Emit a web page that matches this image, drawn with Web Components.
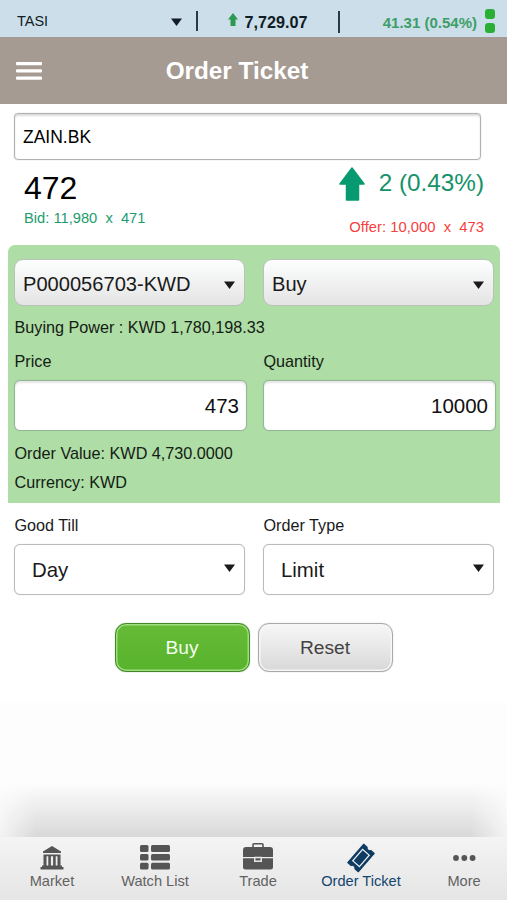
<!DOCTYPE html>
<html lang="en">
<head>
<meta charset="utf-8">
<meta name="viewport" content="width=device-width, initial-scale=1">
<title>Order Ticket</title>
<style>
  html, body {
    margin: 0;
    height: 100%;
    overflow: hidden;
    background: #fff;
    font-family: "Liberation Sans", Arial, sans-serif;
  }
</style>
</head>
<body>
<order-app></order-app>

<script>
const caret = `<svg class="caret" width="11" height="8" viewBox="0 0 11 8"><path d="M0 .5h11L5.5 8z" fill="currentColor"/></svg>`;

class MarketTicker extends HTMLElement {
  connectedCallback() {
    this.attachShadow({ mode: 'open' });
    this.shadowRoot.innerHTML = `
      <style>
        :host {
          display: flex;
          align-items: center;
          box-sizing: border-box;
          height: 37px;
          padding: 6px 12px 0 17px;
          background: #ccdeea;
          color: #101c26;
          white-space: nowrap;
        }
        .market { flex: 0 0 154px; font-size: 14.5px; margin-top: -2px; }
        .sep { width: 2px; height: 20px; background: #2a3a48; }
        .first { margin: -2px 0 0 14px; }
        .second { height: 22px; }
        .index {
          width: 140px;
          display: flex;
          align-items: center;
          justify-content: center;
          gap: 6px;
          font-weight: bold;
          font-size: 16.2px;
        }
        .index svg { margin-top: -4px; }
        .index span { padding-top: 2px; }
        .change { margin-left: auto; padding-top: 1px; font-weight: bold; font-size: 15px; color: #3d9e68; }
        .lights { display: grid; gap: 4px; margin: -2px 0 0 8px; }
        .lights i { width: 10px; height: 10px; border-radius: 3px; background: #29b034; }
      </style>
      <span class="market">TASI</span>
      ${caret}
      <span class="sep first"></span>
      <span class="index">
        <svg width="10" height="13" viewBox="0 0 10 13"><path d="M5 0l5 6.500H7.500V13h-5V6.500H0z" fill="#2c9950"/></svg>
        <span>7,729.07</span>
      </span>
      <span class="sep second"></span>
      <span class="change">41.31 (0.54%)</span>
      <span class="lights"><i></i><i></i></span>
    `;
  }
}
customElements.define('market-ticker', MarketTicker);

class TitleBar extends HTMLElement {
  connectedCallback() {
    this.attachShadow({ mode: 'open' });
    this.shadowRoot.innerHTML = `
      <style>
        :host {
          display: grid;
          grid-template-columns: 26px 1fr 26px;
          align-items: center;
          box-sizing: border-box;
          height: 67px;
          padding: 0 49px 0 16px;
          background: #a59b92;
          color: #fff;
        }
        h1 { margin: 1px 0 0; font-size: 24.3px; line-height: 28px; text-align: center; }
      </style>
      <svg width="26" height="20" viewBox="0 0 26 20" fill="#fff"><rect y="1" width="26" height="3.200" rx="1"/><rect y="8.300" width="26" height="3.200" rx="1"/><rect y="15.600" width="26" height="3.200" rx="1"/></svg>
      <h1><slot></slot></h1>
    `;
  }
}
customElements.define('title-bar', TitleBar);

class QuoteSummary extends HTMLElement {
  connectedCallback() {
    this.attachShadow({ mode: 'open' });
    this.shadowRoot.innerHTML = `
      <style>
        :host { display: block; height: 133px; }
        .symbol {
          box-sizing: border-box;
          width: 467px;
          height: 47px;
          margin: 1px 0 0 14px;
          padding: 0 8px;
          border: 1px solid #b1b1b1;
          border-radius: 4px;
          box-shadow: inset 0 2px 2px rgba(0,0,0,.14), 0 0 1px #aaa;
          font-size: 17.5px;
          line-height: 46px;
        }
        .row { display: flex; justify-content: space-between; padding: 0 23px 0 24px; }
        .last { font-size: 32px; line-height: 36px; padding-top: 10px; }
        .bid, .offer { white-space: pre; line-height: 17px; }
        .bid { font-size: 14.7px; color: #1b9b6e; padding-top: 4px; }
        .right { display: flex; flex-direction: column; align-items: flex-end; }
        .move { display: flex; align-items: center; gap: 14px; font-size: 24.3px; line-height: 28px; color: #15926a; padding-top: 5px; }
        .move svg { margin-top: 2px; }
        .move span { margin-bottom: 1px; }
        .offer { font-size: 14.8px; color: #f7403e; padding-top: 18px; }
      </style>
      <div class="symbol">ZAIN.BK</div>
      <div class="row">
        <div>
          <div class="last">472</div>
          <div class="bid">Bid: 11,980  x  471</div>
        </div>
        <div class="right">
          <div class="move">
            <svg width="26" height="34" viewBox="0 0 26 34"><path d="M13 1l12 16h-5.500v16h-12V17H1z" fill="#079a70" stroke="#079a70" stroke-width="1.500" stroke-linejoin="round"/></svg>
            <span>2 (0.43%)</span>
          </div>
          <div class="offer">Offer: 10,000  x  473</div>
        </div>
      </div>
    `;
  }
}
customElements.define('quote-summary', QuoteSummary);

// variant="glossy" gives the rounded gradient menu, otherwise a flat outlined one
class SelectBox extends HTMLElement {
  connectedCallback() {
    this.attachShadow({ mode: 'open' });
    this.shadowRoot.innerHTML = `
      <style>
        :host {
          display: flex;
          align-items: center;
          justify-content: space-between;
          box-sizing: border-box;
          height: 51px;
          padding: 0 9px 0 17px;
          border: 1px solid #bbb;
          border-radius: 6px;
          background: #fff;
          color: #1a1a1a;
          font-size: 20.4px;
          box-shadow: 0 0 1px #ccc;
        }
        :host([variant="glossy"]) {
          height: 47px;
          padding: 2px 9px 0 8px;
          border-color: #b9c2b9;
          border-radius: 9px;
          background: linear-gradient(#fdfefe, #e4e4e5);
          box-shadow: none;
          font-size: 20.1px;
        }
        .caret { margin-top: -4px; }
        :host([variant="glossy"]) .caret { margin-top: 3px; }
      </style>
      <slot></slot>${caret}
    `;
  }
}
customElements.define('select-box', SelectBox);

class NumberBox extends HTMLElement {
  connectedCallback() {
    this.attachShadow({ mode: 'open' });
    this.shadowRoot.innerHTML = `
      <style>
        :host {
          display: block;
          box-sizing: border-box;
          height: 51px;
          padding: 0 7px;
          border: 1px solid #93b893;
          border-radius: 6px;
          background: #fff;
          box-shadow: inset 0 2px 2px rgba(0,0,0,.1), 0 0 1px #93b8a0;
          color: #111;
          font-size: 20.5px;
          line-height: 50px;
          text-align: right;
        }
      </style>
      <slot></slot>
    `;
  }
}
customElements.define('number-box', NumberBox);

class PushButton extends HTMLElement {
  connectedCallback() {
    this.attachShadow({ mode: 'open' });
    this.shadowRoot.innerHTML = `
      <style>
        :host {
          display: block;
          box-sizing: border-box;
          width: 135px;
          height: 49px;
          border: 1px solid #a9a9a9;
          border-radius: 11px;
          background: linear-gradient(#f7f7f7, #d9d8d9);
          box-shadow: inset 0 0 0 1.5px #f6f6f6, 0 0 1px #aaa;
          color: #424242;
          font-size: 19.2px;
          line-height: 48px;
          text-align: center;
        }
        :host([primary]) {
          border-color: #41872a;
          background: linear-gradient(#66bb37, #58b32c);
          box-shadow: inset 0 0 0 1.5px #a0dc80, 0 0 1px #5f9f48;
          color: #f5fff0;
        }
      </style>
      <slot></slot>
    `;
  }
}
customElements.define('push-button', PushButton);

class OrderForm extends HTMLElement {
  connectedCallback() {
    this.attachShadow({ mode: 'open' });
    this.shadowRoot.innerHTML = `
      <style>
        :host { display: block; color: #142014; font-size: 16.2px; line-height: 20px; }
        .panel {
          box-sizing: border-box;
          height: 258px;
          margin: 0 7px 0 8px;
          padding: 14px 0 0 6px;
          border-radius: 7px 7px 0 0;
          background: #aedda5;
        }
        .cols { display: grid; grid-template-columns: 231px 231px; gap: 18px; }
        .inputs { grid-template-columns: 233px 233px; gap: 16px; }
        .power { padding: 11px 0 14px 0; }
        .labels { padding-bottom: 9px; }
        .value { padding: 12px 0 9px; }
        .extra { margin: 12px 14px 0 14px; color: #1a1a1a; }
        .actions { display: flex; justify-content: center; gap: 8px; padding-top: 28px; }
        .text { padding-left: .5px; }
      </style>
      <div class="panel">
        <div class="cols">
          <select-box variant="glossy">P000056703-KWD</select-box>
          <select-box variant="glossy">Buy</select-box>
        </div>
        <div class="power text">Buying Power : KWD 1,780,198.33</div>
        <div class="cols labels text"><span>Price</span><span>Quantity</span></div>
        <div class="cols inputs">
          <number-box>473</number-box>
          <number-box>10000</number-box>
        </div>
        <div class="value text">Order Value: KWD 4,730.0000</div>
        <div class="text">Currency: KWD</div>
      </div>
      <div class="extra">
        <div class="cols labels text"><span>Good Till</span><span>Order Type</span></div>
        <div class="cols">
          <select-box>Day</select-box>
          <select-box>Limit</select-box>
        </div>
      </div>
      <div class="actions">
        <push-button primary>Buy</push-button>
        <push-button>Reset</push-button>
      </div>
    `;
  }
}
customElements.define('order-form', OrderForm);

const icons = {
  market: `<path d="M12 1L3 6.500V8h18V6.500zM3.500 9.500h17v1.800h-17zM3.500 11h3v10h-3zM8.300 11h2.600v10H8.300zM13.100 11h2.600v10h-2.600zM17.500 11h3v10h-3zM2 20.500h20v1.500H2zM.5 22h23v2.500H.5z"/>`,
  list: `<rect width="8.500" height="7" rx="1.500"/><rect x="11" width="19" height="7" rx="1.500"/><rect y="9" width="8.500" height="6.500" rx="1.500"/><rect x="11" y="9" width="19" height="6.500" rx="1.500"/><rect y="17.800" width="8.500" height="6.700" rx="1.500"/><rect x="11" y="17.800" width="19" height="6.700" rx="1.500"/>`,
  trade: `<path d="M10 5V1.500Q10 .8 11 .8h8q1 0 1 .7V5" fill="none" stroke="currentColor" stroke-width="1.600"/><path d="M3 4h24q3 0 3 3v7H0V7q0-3 3-3zM0 15.300h11V19h8v-3.700h11V24q0 2.500-2.500 2.500h-25Q0 26.500 0 24z"/><path d="M11.800 14.500h6.400v3.700h-6.400z" fill="currentColor" stroke="#eee" stroke-width="1.300"/>`,
  ticket: `<g transform="rotate(-49 14 14)"><path d="M1.800 7h24.400v4.500a2.800 2.800 0 0 0 0 5V21H1.800v-4.500a2.800 2.800 0 0 0 0-5z" stroke="currentColor" stroke-linejoin="round"/><path d="M6.500 9.600h15v8.800h-15z" fill="none" stroke="#f1f1f1" stroke-width="1.200"/></g>`,
  more: `<circle cx="3" cy="3" r="2.900"/><circle cx="11.300" cy="3" r="2.900"/><circle cx="19.600" cy="3" r="2.900"/>`
};

class TabItem extends HTMLElement {
  connectedCallback() {
    const w = this.getAttribute('w');
    const h = this.getAttribute('h');
    this.attachShadow({ mode: 'open' });
    this.shadowRoot.innerHTML = `
      <style>
        :host { display: grid; grid-template-rows: 35px 18px; justify-items: center; color: #626262; font-size: 14.6px; line-height: 18px; white-space: nowrap; }
        :host([active]) { color: #12456d; }
        svg { display: block; overflow: visible; align-self: end; fill: currentColor; color: #555; margin-bottom: ${this.getAttribute('lift')}px; }
        :host([active]) svg { color: #0d3b61; }
      </style>
      <svg width="${w}" height="${h}" viewBox="0 0 ${w} ${h}">${icons[this.getAttribute('icon')]}</svg>
      <span><slot></slot></span>
    `;
  }
}
customElements.define('tab-item', TabItem);

class TabBar extends HTMLElement {
  connectedCallback() {
    this.attachShadow({ mode: 'open' });
    this.shadowRoot.innerHTML = `
      <style>
        :host {
          display: grid;
          grid-template-columns: repeat(5, 103px);
          box-sizing: border-box;
          height: 63px;
          padding-left: .5px;
          background: linear-gradient(#f4f4f4, #e5e5e5);
        }
      </style>
      <slot></slot>
    `;
  }
}
customElements.define('tab-bar', TabBar);

class OrderApp extends HTMLElement {
  connectedCallback() {
    this.attachShadow({ mode: 'open' });
    this.shadowRoot.innerHTML = `
      <style>
        :host { display: flex; flex-direction: column; width: 507px; height: 900px; overflow: hidden; }
        quote-summary { display: flow-root; margin-top: 8px; }
        .space { flex: 1; display: flex; flex-direction: column; justify-content: flex-end; margin-top: 31px; background: #fdfdfd; overflow: hidden; }
        .shade {
          height: 54px;
          background: linear-gradient(rgba(212,212,212,0), rgba(212,212,212,.35) 40%, #d8d8d8);
          -webkit-mask-image: linear-gradient(90deg, rgba(0,0,0,.25), #000 36px, #000 calc(100% - 36px), rgba(0,0,0,.25));
          mask-image: linear-gradient(90deg, rgba(0,0,0,.25), #000 36px, #000 calc(100% - 36px), rgba(0,0,0,.25));
        }
      </style>
      <market-ticker></market-ticker>
      <title-bar>Order Ticket</title-bar>
      <quote-summary></quote-summary>
      <order-form></order-form>
      <div class="space"><div class="shade"></div></div>
      <tab-bar>
        <tab-item icon="market" w="24" h="25" lift="2">Market</tab-item>
        <tab-item icon="list" w="30" h="25" lift="2">Watch List</tab-item>
        <tab-item icon="trade" w="30" h="27" lift="2">Trade</tab-item>
        <tab-item icon="ticket" w="28" h="28" lift="0" active>Order Ticket</tab-item>
        <tab-item icon="more" w="22" h="6" lift="11">More</tab-item>
      </tab-bar>
    `;
  }
}
customElements.define('order-app', OrderApp);
</script>
</body>
</html>
